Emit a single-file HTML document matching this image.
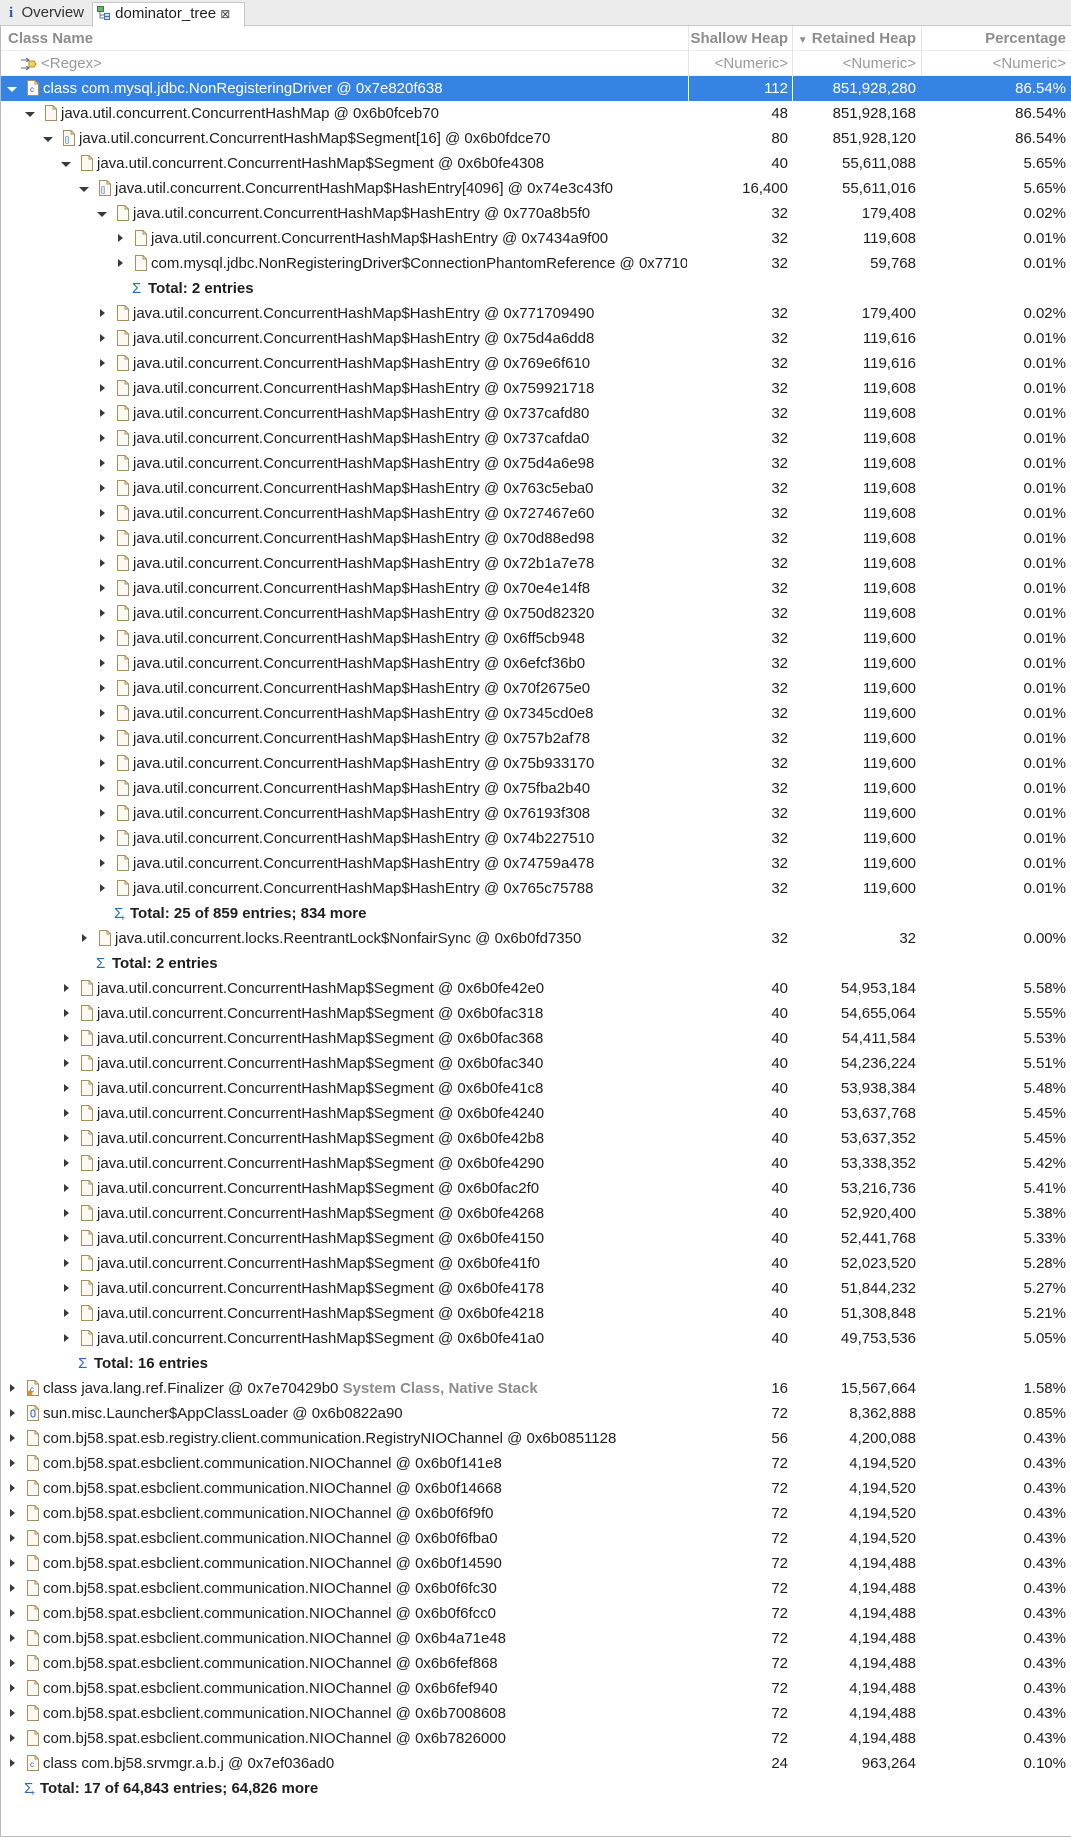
<!DOCTYPE html>
<html><head><meta charset="utf-8"><style>
*{margin:0;padding:0;box-sizing:border-box}
body{width:1071px;height:1840px;background:#fff;font-family:"Liberation Sans",sans-serif;font-size:15px;color:#1e1e1e;position:relative;overflow:hidden}
.tabs{position:absolute;left:0;top:0;width:1071px;height:26px;background:#ececec;border-bottom:1px solid #c8c8c8}
.tab{position:absolute;top:2px;height:24px;line-height:22px;font-size:15px}
.t1{left:1px;width:90px;padding-left:8px;color:#333}
.t2{left:92px;width:153px;background:#fff;border:1px solid #c8c8c8;border-bottom:none;padding-left:4px;height:25px}
.frame{position:absolute;left:0;top:26px;width:1071px;height:1811px;border-left:1px solid #bbb;border-bottom:1px solid #bbb}
.hdr{position:absolute;top:26px;left:1px;width:1070px;height:25px;line-height:25px;font-weight:bold;color:#8d8d8d;border-bottom:1px solid #eee}
.flt{position:absolute;top:51px;left:1px;width:1070px;height:25px;line-height:25px;color:#999;border-bottom:1px solid #f0f0f0}
.vl{position:absolute;top:0;width:1px;height:25px;background:#e4e4e4}
.r{position:absolute;left:1px;width:1070px;height:25px;line-height:26px;white-space:nowrap}
.r.sel{background:#3584e4;color:#fff}
.r.sel .vl{background:#fff}
.n{position:absolute;top:0}
.a,.b,.c{position:absolute;top:0;text-align:right}
.a{right:283px}.b{right:155px}.c{right:5px}
.ar{position:absolute;top:8px;width:0;height:0}
.e{border-left:5px solid transparent;border-right:5px solid transparent;border-top:5px solid #3a3a3a;top:11px}
.cl{border-top:4.5px solid transparent;border-bottom:4.5px solid transparent;border-left:5px solid #3a3a3a}
.sel .e{border-top-color:#fff}
.ic{position:absolute;top:4px}
.tot{font-weight:bold}
.sg{position:absolute;top:0;color:#2a6ab0;font-weight:normal}
.gr{color:#8d8d8d;font-weight:bold}
</style></head><body>
<div class="tabs">
<div class="tab t1"><span style="color:#2a5db0;font-weight:bold;font-family:'Liberation Serif',serif">i</span>&nbsp; Overview</div>
<div class="tab t2"><svg width="14" height="14" style="vertical-align:-2px"><rect x="0.5" y="0.5" width="6" height="5" fill="#6db36d" stroke="#3d7a3d"/><path d="M3 6v6h4M3 9h4" stroke="#5577aa" fill="none"/><rect x="7.5" y="7.5" width="5" height="3" fill="#cfe0f5" stroke="#4a6fa5"/><rect x="7.5" y="10.5" width="5" height="3" fill="#cfe0f5" stroke="#4a6fa5"/></svg> dominator_tree <span style="font-size:12px;color:#444">⊠</span></div>
</div>
<div class="frame"></div>
<div class="hdr"><span style="position:absolute;left:7px">Class Name</span>
<div class="vl" style="left:687px"></div><div class="vl" style="left:791px"></div><div class="vl" style="left:920px"></div>
<span class="a">Shallow Heap</span><span class="b"><span style="font-size:10px">▼</span> Retained Heap</span><span class="c">Percentage</span></div>
<div class="flt"><svg class="ic" style="left:20px;top:6px" width="16" height="14"><path d="M0 3h8M5 1l3 2-3 2M0 11h8M5 9l3 2-3 2" stroke="#5a6a8a" fill="none"/><path d="M8 4h5l2 3-2 3H8z" fill="#f2d15c" stroke="#b8901c"/></svg><span style="position:absolute;left:40px">&lt;Regex&gt;</span>
<div class="vl" style="left:687px"></div><div class="vl" style="left:791px"></div><div class="vl" style="left:920px"></div>
<span class="a">&lt;Numeric&gt;</span><span class="b">&lt;Numeric&gt;</span><span class="c">&lt;Numeric&gt;</span></div>
<svg width="0" height="0" style="position:absolute"><defs>
<symbol id="doc" viewBox="0 0 12 16"><path d="M.5 .5h7.5l3.5 3.5v11.5h-11z" fill="#fbf9f1" stroke="#a8905a"/><path d="M8 .5v3.5h3.5" fill="none" stroke="#a8905a"/></symbol>
</defs></svg>
<div id="rows">
<div class="r sel" style="top:76px"><div class="ar e" style="left:6px"></div><svg class="ic" style="left:26px" width="12" height="16"><use href="#doc"/><text x="3" y="12" font-size="8" fill="#2a5db0" font-family="Liberation Sans">c</text></svg><span class="n" style="left:42px">class com.mysql.jdbc.NonRegisteringDriver @ 0x7e820f638</span><div class="vl" style="left:687px"></div><div class="vl" style="left:791px"></div><span class="a">112</span><span class="b">851,928,280</span><span class="c">86.54%</span></div>
<div class="r" style="top:101px"><div class="ar e" style="left:24px"></div><svg class="ic" style="left:44px" width="12" height="16"><use href="#doc"/></svg><span class="n" style="left:60px">java.util.concurrent.ConcurrentHashMap @ 0x6b0fceb70</span><span class="a">48</span><span class="b">851,928,168</span><span class="c">86.54%</span></div>
<div class="r" style="top:126px"><div class="ar e" style="left:42px"></div><svg class="ic" style="left:62px" width="12" height="16"><use href="#doc"/><text x="2" y="12" font-size="7" fill="#2a5db0">[]</text></svg><span class="n" style="left:78px">java.util.concurrent.ConcurrentHashMap$Segment[16] @ 0x6b0fdce70</span><span class="a">80</span><span class="b">851,928,120</span><span class="c">86.54%</span></div>
<div class="r" style="top:151px"><div class="ar e" style="left:60px"></div><svg class="ic" style="left:80px" width="12" height="16"><use href="#doc"/></svg><span class="n" style="left:96px">java.util.concurrent.ConcurrentHashMap$Segment @ 0x6b0fe4308</span><span class="a">40</span><span class="b">55,611,088</span><span class="c">5.65%</span></div>
<div class="r" style="top:176px"><div class="ar e" style="left:78px"></div><svg class="ic" style="left:98px" width="12" height="16"><use href="#doc"/><text x="2" y="12" font-size="7" fill="#2a5db0">[]</text></svg><span class="n" style="left:114px">java.util.concurrent.ConcurrentHashMap$HashEntry[4096] @ 0x74e3c43f0</span><span class="a">16,400</span><span class="b">55,611,016</span><span class="c">5.65%</span></div>
<div class="r" style="top:201px"><div class="ar e" style="left:96px"></div><svg class="ic" style="left:116px" width="12" height="16"><use href="#doc"/></svg><span class="n" style="left:132px">java.util.concurrent.ConcurrentHashMap$HashEntry @ 0x770a8b5f0</span><span class="a">32</span><span class="b">179,408</span><span class="c">0.02%</span></div>
<div class="r" style="top:226px"><div class="ar cl" style="left:117px"></div><svg class="ic" style="left:134px" width="12" height="16"><use href="#doc"/></svg><span class="n" style="left:150px">java.util.concurrent.ConcurrentHashMap$HashEntry @ 0x7434a9f00</span><span class="a">32</span><span class="b">119,608</span><span class="c">0.01%</span></div>
<div class="r" style="top:251px"><div class="ar cl" style="left:117px"></div><svg class="ic" style="left:134px" width="12" height="16"><use href="#doc"/></svg><span class="n" style="left:150px;width:536px;overflow:hidden">com.mysql.jdbc.NonRegisteringDriver$ConnectionPhantomReference @ 0x77109</span><span class="a">32</span><span class="b">59,768</span><span class="c">0.01%</span></div>
<div class="r tot" style="top:276px"><span class="sg" style="left:131px">Σ</span><span class="n" style="left:147px">Total: 2 entries</span></div>
</div>
<div id="he"></div>
<script>
(function(){
var H=[["0x771709490","179,400","0.02%"],["0x75d4a6dd8","119,616"],["0x769e6f610","119,616"],["0x759921718","119,608"],["0x737cafd80","119,608"],["0x737cafda0","119,608"],["0x75d4a6e98","119,608"],["0x763c5eba0","119,608"],["0x727467e60","119,608"],["0x70d88ed98","119,608"],["0x72b1a7e78","119,608"],["0x70e4e14f8","119,608"],["0x750d82320","119,608"],["0x6ff5cb948","119,600"],["0x6efcf36b0","119,600"],["0x70f2675e0","119,600"],["0x7345cd0e8","119,600"],["0x757b2af78","119,600"],["0x75b933170","119,600"],["0x75fba2b40","119,600"],["0x76193f308","119,600"],["0x74b227510","119,600"],["0x74759a478","119,600"],["0x765c75788","119,600"]];
var s="",y=301;
function row(L,name,a,b,c,icon,extra){var ax=6+18*L,ix=26+18*L,tx=42+18*L;
var ic='<svg class="ic" style="left:'+ix+'px" width="12" height="16"><use href="#doc"/>'+(icon||'')+'</svg>';
s+='<div class="r" style="top:'+y+'px"><div class="ar cl" style="left:'+(ax+3)+'px"></div>'+ic+'<span class="n" style="left:'+tx+'px">'+name+(extra||'')+'</span><span class="a">'+a+'</span><span class="b">'+b+'</span><span class="c">'+c+'</span></div>';y+=25;}
function tot(L,t,plus){var ix=26+18*L-3;s+='<div class="r tot" style="top:'+y+'px"><span class="sg" style="left:'+ix+'px">Σ'+(plus?'<span style="font-size:9px;position:relative;left:-3px;top:3px">+</span>':'')+'</span><span class="n" style="left:'+(ix+16)+'px">'+t+'</span></div>';y+=25;}
H.forEach(function(h){row(5,"java.util.concurrent.ConcurrentHashMap$HashEntry @ "+h[0],"32",h[1],h[2]||"0.01%");});
tot(5,"Total: 25 of 859 entries; 834 more",1);
row(4,"java.util.concurrent.locks.ReentrantLock$NonfairSync @ 0x6b0fd7350","32","32","0.00%");
tot(4,"Total: 2 entries");
var S=[["0x6b0fe42e0","54,953,184","5.58%"],["0x6b0fac318","54,655,064","5.55%"],["0x6b0fac368","54,411,584","5.53%"],["0x6b0fac340","54,236,224","5.51%"],["0x6b0fe41c8","53,938,384","5.48%"],["0x6b0fe4240","53,637,768","5.45%"],["0x6b0fe42b8","53,637,352","5.45%"],["0x6b0fe4290","53,338,352","5.42%"],["0x6b0fac2f0","53,216,736","5.41%"],["0x6b0fe4268","52,920,400","5.38%"],["0x6b0fe4150","52,441,768","5.33%"],["0x6b0fe41f0","52,023,520","5.28%"],["0x6b0fe4178","51,844,232","5.27%"],["0x6b0fe4218","51,308,848","5.21%"],["0x6b0fe41a0","49,753,536","5.05%"]];
S.forEach(function(h){row(3,"java.util.concurrent.ConcurrentHashMap$Segment @ "+h[0],"40",h[1],h[2]);});
tot(3,"Total: 16 entries");
var C='<text x="3" y="12" font-size="8" fill="#2a5db0">c</text>';
row(0,"class java.lang.ref.Finalizer @ 0x7e70429b0","16","15,567,664","1.58%",C+'<circle cx="3" cy="13" r="2.5" fill="#e08a2a"/>',' <span class="gr">System Class, Native Stack</span>');
row(0,"sun.misc.Launcher$AppClassLoader @ 0x6b0822a90","72","8,362,888","0.85%",'<rect x="4" y="5" width="4" height="7" rx="2" fill="none" stroke="#2a5db0"/>');
row(0,"com.bj58.spat.esb.registry.client.communication.RegistryNIOChannel @ 0x6b0851128","56","4,200,088","0.43%");
var N=[["0x6b0f141e8","4,194,520"],["0x6b0f14668","4,194,520"],["0x6b0f6f9f0","4,194,520"],["0x6b0f6fba0","4,194,520"],["0x6b0f14590","4,194,488"],["0x6b0f6fc30","4,194,488"],["0x6b0f6fcc0","4,194,488"],["0x6b4a71e48","4,194,488"],["0x6b6fef868","4,194,488"],["0x6b6fef940","4,194,488"],["0x6b7008608","4,194,488"],["0x6b7826000","4,194,488"]];
N.forEach(function(h){row(0,"com.bj58.spat.esbclient.communication.NIOChannel @ "+h[0],"72",h[1],"0.43%");});
row(0,"class com.bj58.srvmgr.a.b.j @ 0x7ef036ad0","24","963,264","0.10%",C);
tot(0,"Total: 17 of 64,843 entries; 64,826 more",1);
document.getElementById("he").innerHTML=s;
})();
</script>
</body></html>
